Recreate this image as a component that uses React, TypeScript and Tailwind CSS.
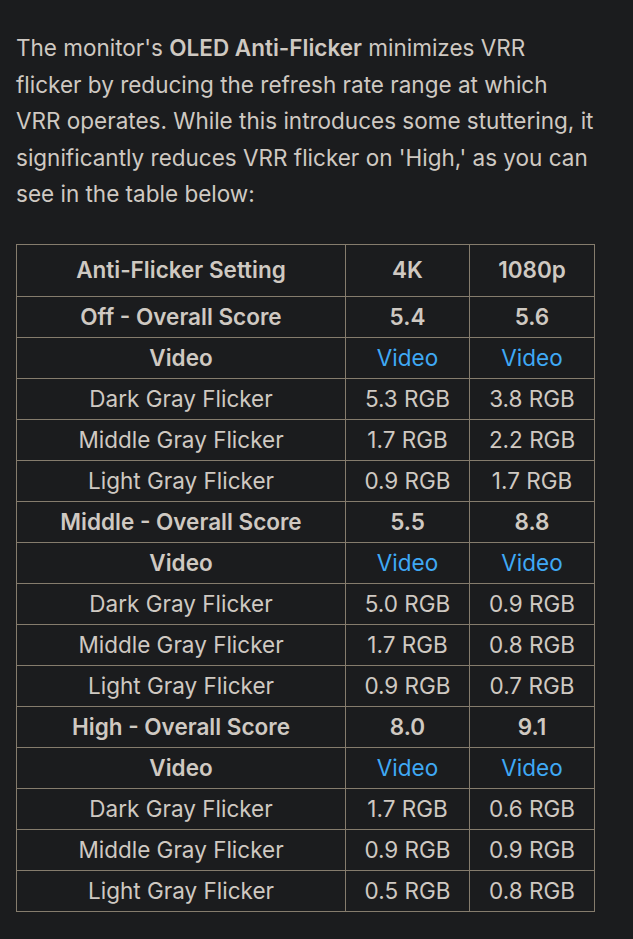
const rows: { label: string; k4: string; p1080: string; kind: "score" | "video" | "plain" }[] = [
  { label: "Off - Overall Score", k4: "5.4", p1080: "5.6", kind: "score" },
  { label: "Video", k4: "Video", p1080: "Video", kind: "video" },
  { label: "Dark Gray Flicker", k4: "5.3 RGB", p1080: "3.8 RGB", kind: "plain" },
  { label: "Middle Gray Flicker", k4: "1.7 RGB", p1080: "2.2 RGB", kind: "plain" },
  { label: "Light Gray Flicker", k4: "0.9 RGB", p1080: "1.7 RGB", kind: "plain" },
  { label: "Middle - Overall Score", k4: "5.5", p1080: "8.8", kind: "score" },
  { label: "Video", k4: "Video", p1080: "Video", kind: "video" },
  { label: "Dark Gray Flicker", k4: "5.0 RGB", p1080: "0.9 RGB", kind: "plain" },
  { label: "Middle Gray Flicker", k4: "1.7 RGB", p1080: "0.8 RGB", kind: "plain" },
  { label: "Light Gray Flicker", k4: "0.9 RGB", p1080: "0.7 RGB", kind: "plain" },
  { label: "High - Overall Score", k4: "8.0", p1080: "9.1", kind: "score" },
  { label: "Video", k4: "Video", p1080: "Video", kind: "video" },
  { label: "Dark Gray Flicker", k4: "1.7 RGB", p1080: "0.6 RGB", kind: "plain" },
  { label: "Middle Gray Flicker", k4: "0.9 RGB", p1080: "0.9 RGB", kind: "plain" },
  { label: "Light Gray Flicker", k4: "0.5 RGB", p1080: "0.8 RGB", kind: "plain" }
];

const cell = "border border-[#857c6d] px-2 text-center h-[41px] p-0";

export default function App() {
  return (
    <div className="min-h-[939px] bg-[#1b1c1e] px-4 pt-[30px] pb-6 text-[#cfc9c2] [font-family:Inter,'Noto_Sans',sans-serif]">
      <div className="w-[580px]">
        <p className="text-[22.5px] leading-[36.5px]">
          The monitor's <strong className="font-semibold">OLED Anti-Flicker</strong> minimizes VRR flicker by
          reducing the refresh rate range at which VRR operates. While this introduces some stuttering, it
          significantly reduces VRR flicker on 'High,' as you can see in the table below:
        </p>

        <table className="mt-[31px] w-[579px] border-collapse text-[22.5px] leading-[30px]">
          <thead>
            <tr>
              <th className={`${cell} h-[52px] w-[329px] font-semibold`}>Anti-Flicker Setting</th>
              <th className={`${cell} h-[52px] w-[124px] font-semibold`}>4K</th>
              <th className={`${cell} h-[52px] font-semibold`}>1080p</th>
            </tr>
          </thead>
          <tbody>
            {rows.map((r, i) => (
              <tr key={i}>
                <td className={`${cell} ${r.kind === "plain" ? "" : "font-semibold"}`}>{r.label}</td>
                <td className={`${cell} ${r.kind === "score" ? "font-semibold" : ""} ${r.kind === "video" ? "text-[#3fa9f5]" : ""}`}>
                  {r.k4}
                </td>
                <td className={`${cell} ${r.kind === "score" ? "font-semibold" : ""} ${r.kind === "video" ? "text-[#3fa9f5]" : ""}`}>
                  {r.p1080}
                </td>
              </tr>
            ))}
          </tbody>
        </table>
      </div>
    </div>
  );
}
